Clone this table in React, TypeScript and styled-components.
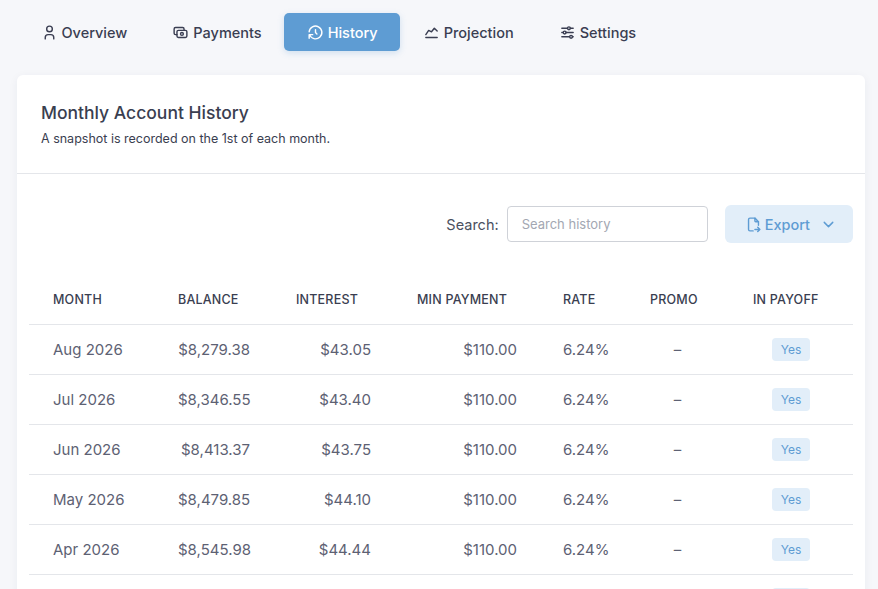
import React from "react";
import styled, { createGlobalStyle } from "styled-components";
import {
  TbUser,
  TbCash,
  TbHistory,
  TbChartLine,
  TbAdjustmentsHorizontal,
  TbFileExport,
  TbChevronDown,
} from "react-icons/tb";

const GlobalStyle = createGlobalStyle`
  html, body {
    margin: 0;
    padding: 0;
    background: #f6f7fa;
    font-family: Inter, "Noto Sans", sans-serif;
    color: #3a3e50;
  }
  * { box-sizing: border-box; }
`;

const Page = styled.div`
  padding: 13px 13px 0 17px;
`;

const Tabs = styled.nav`
  display: flex;
  align-items: center;
  margin-left: 1px;
`;

const Tab = styled.button<{ $active?: boolean }>`
  display: flex;
  align-items: center;
  gap: 4px;
  height: 38px;
  padding: 0 22.5px;
  border: none;
  border-radius: 5px;
  font-family: inherit;
  font-size: 14.5px;
  font-weight: 500;
  color: ${(p) => (p.$active ? "#ffffff" : "#3a3e52")};
  background: ${(p) => (p.$active ? "#5e9cd3" : "transparent")};
  box-shadow: ${(p) => (p.$active ? "0 2px 6px rgba(94,156,211,0.25)" : "none")};
  cursor: pointer;

  svg {
    width: 17px;
    height: 17px;
  }
`;

const Card = styled.section`
  margin-top: 24px;
  background: #ffffff;
  border-radius: 6px;
  box-shadow: 0 2px 10px rgba(40, 50, 80, 0.06);
`;

const CardHeader = styled.header`
  padding: 25px 24px 25px;
  border-bottom: 1px solid #e4e6ea;
`;

const Title = styled.h2`
  margin: 0;
  font-size: 17.5px;
  line-height: 26px;
  font-weight: 500;
  color: #3a3e50;
`;

const Subtitle = styled.p`
  margin: 4px 0 0;
  font-size: 12.5px;
  line-height: 18px;
  color: #3a3e50;
`;

const CardBody = styled.div`
  padding: 31px 12px 0;
`;

const Toolbar = styled.div`
  display: flex;
  justify-content: flex-end;
  align-items: center;
  gap: 17px;
`;

const SearchGroup = styled.label`
  display: flex;
  align-items: center;
  gap: 8px;
  font-size: 14.5px;
  color: #4b5060;
`;

const SearchInput = styled.input`
  width: 201px;
  height: 36px;
  padding: 0 14px;
  border: 1px solid #cfd2d8;
  border-radius: 4px;
  font-family: inherit;
  font-size: 13px;
  color: #3a3e50;
  outline: none;

  &::placeholder {
    color: #a3a7b2;
  }
`;

const ExportButton = styled.button`
  display: flex;
  align-items: center;
  gap: 3px;
  height: 38px;
  padding: 0 16px 0 20px;
  border: none;
  border-radius: 6px;
  background: #e2eef9;
  color: #5e9cd3;
  font-family: inherit;
  font-size: 14.5px;
  font-weight: 500;
  cursor: pointer;

  svg {
    width: 17px;
    height: 17px;
  }
`;

const Chevron = styled.span`
  display: flex;
  margin-left: 7px;
`;

const Table = styled.table`
  width: 100%;
  margin-top: 31px;
  border-collapse: collapse;
  table-layout: fixed;
`;

const Th = styled.th`
  height: 50px;
  padding: 1px 24px 0;
  text-align: left;
  font-size: 12.5px;
  font-weight: 500;
  letter-spacing: 0.2px;
  color: #3a3e50;
  text-transform: uppercase;
  white-space: nowrap;
  border-bottom: 1px solid #e4e6ea;
`;

const Td = styled.td<{ $align?: "left" | "right" | "center" }>`
  height: 50px;
  padding: 0 ${(p) => (p.$align === "right" ? "22px" : "24px")} 0 24px;
  text-align: ${(p) => p.$align ?? "left"};
  font-size: 15px;
  color: #5d6173;
  white-space: nowrap;
  border-bottom: 1px solid #e4e6ea;
`;

const Badge = styled.span`
  display: inline-block;
  padding: 4px 9px;
  border-radius: 4px;
  background: #e2eef9;
  color: #5e9cd3;
  font-size: 12px;
  line-height: 15px;
`;

const columns: { label: string; width: number }[] = [
  { label: "Month", width: 125 },
  { label: "Balance", width: 118 },
  { label: "Interest", width: 121 },
  { label: "Min Payment", width: 146 },
  { label: "Rate", width: 87 },
  { label: "Promo", width: 103 },
  { label: "In Payoff", width: 124 },
];

const rows = [
  { month: "Aug 2026", balance: "$8,279.38", interest: "$43.05" },
  { month: "Jul 2026", balance: "$8,346.55", interest: "$43.40" },
  { month: "Jun 2026", balance: "$8,413.37", interest: "$43.75" },
  { month: "May 2026", balance: "$8,479.85", interest: "$44.10" },
  { month: "Apr 2026", balance: "$8,545.98", interest: "$44.44" },
  { month: "Mar 2026", balance: "$8,611.77", interest: "$44.78" },
];

const tabs = [
  { label: "Overview", icon: <TbUser /> },
  { label: "Payments", icon: <TbCash /> },
  { label: "History", icon: <TbHistory />, active: true },
  { label: "Projection", icon: <TbChartLine /> },
  { label: "Settings", icon: <TbAdjustmentsHorizontal /> },
];

export default function App() {
  return (
    <>
      <GlobalStyle />
      <Page>
        <Tabs>
          {tabs.map((t) => (
            <Tab key={t.label} $active={t.active}>
              {t.icon}
              {t.label}
            </Tab>
          ))}
        </Tabs>

        <Card>
          <CardHeader>
            <Title>Monthly Account History</Title>
            <Subtitle>A snapshot is recorded on the 1st of each month.</Subtitle>
          </CardHeader>

          <CardBody>
            <Toolbar>
              <SearchGroup>
                Search:
                <SearchInput placeholder="Search history" />
              </SearchGroup>
              <ExportButton>
                <TbFileExport />
                Export
                <Chevron>
                  <TbChevronDown />
                </Chevron>
              </ExportButton>
            </Toolbar>

            <Table>
              <colgroup>
                {columns.map((c) => (
                  <col key={c.label} style={{ width: c.width }} />
                ))}
              </colgroup>
              <thead>
                <tr>
                  {columns.map((c) => (
                    <Th key={c.label}>{c.label}</Th>
                  ))}
                </tr>
              </thead>
              <tbody>
                {rows.map((r) => (
                  <tr key={r.month}>
                    <Td>{r.month}</Td>
                    <Td $align="right">{r.balance}</Td>
                    <Td $align="right">{r.interest}</Td>
                    <Td $align="right">$110.00</Td>
                    <Td>6.24%</Td>
                    <Td $align="center">–</Td>
                    <Td $align="center">
                      <Badge>Yes</Badge>
                    </Td>
                  </tr>
                ))}
              </tbody>
            </Table>
          </CardBody>
        </Card>
      </Page>
    </>
  );
}
